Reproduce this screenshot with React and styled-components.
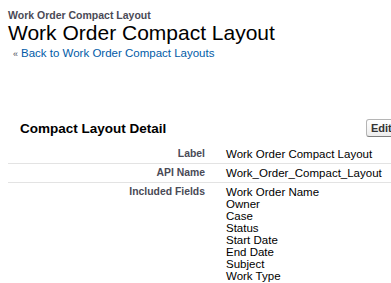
import React from "react";
import styled, { createGlobalStyle } from "styled-components";

const GlobalStyle = createGlobalStyle`
  html, body {
    margin: 0;
    padding: 0;
    background: #ffffff;
    overflow: hidden;
  }
  body {
    font-family: "Liberation Sans", Arial, Helvetica, sans-serif;
    color: #000000;
  }
`;

const fields = [
  "Work Order Name",
  "Owner",
  "Case",
  "Status",
  "Start Date",
  "End Date",
  "Subject",
  "Work Type",
];

export default function App() {
  return (
    <Page>
      <GlobalStyle />
      <Header>
        <PageType>Work Order Compact Layout</PageType>
        <PageTitle>Work Order Compact Layout</PageTitle>
        <BackRow>
          <Chevron>«</Chevron>
          <BackLink href="#">Back to Work Order Compact Layouts</BackLink>
        </BackRow>
      </Header>

      <Section>
        <SectionHeader>
          <SectionTitle>Compact Layout Detail</SectionTitle>
          <EditButton>Edit</EditButton>
        </SectionHeader>
        <DetailTable>
          <DetailRow>
            <LabelCol>Label</LabelCol>
            <DataCol>Work Order Compact Layout</DataCol>
          </DetailRow>
          <DetailRow>
            <LabelCol>API Name</LabelCol>
            <DataCol>Work_Order_Compact_Layout</DataCol>
          </DetailRow>
          <DetailRow last>
            <LabelCol>Included Fields</LabelCol>
            <DataCol>
              {fields.map((f) => (
                <FieldLine key={f}>{f}</FieldLine>
              ))}
            </DataCol>
          </DetailRow>
        </DetailTable>
      </Section>
    </Page>
  );
}

const Page = styled.div`
  width: 460px;
`;

const Header = styled.div`
  padding: 9px 0 0 8px;
`;

const PageType = styled.div`
  font-size: 10.5px;
  line-height: 12px;
  font-weight: bold;
  color: #4a4a56;
`;

const PageTitle = styled.h1`
  margin: 0;
  font-size: 21px;
  line-height: 24px;
  font-weight: normal;
  color: #000000;
`;

const BackRow = styled.div`
  display: flex;
  align-items: baseline;
  gap: 3px;
  margin: 1px 0 0 5px;
  font-size: 11.5px;
  line-height: 14px;
`;

const Chevron = styled.span`
  font-size: 9px;
  color: #4a4a56;
`;

const BackLink = styled.a`
  color: #015ba7;
  text-decoration: none;
`;

const Section = styled.div`
  margin: 54px 0 0 8px;
`;

const SectionHeader = styled.div`
  display: flex;
  align-items: center;
  height: 26px;
  padding: 0 0 4px 12px;
`;

const SectionTitle = styled.h2`
  margin: 0;
  font-size: 13.5px;
  font-weight: bold;
  color: #000000;
  width: 346px;
`;

const EditButton = styled.button`
  height: 18px;
  padding: 0 4px;
  font-family: inherit;
  font-size: 11px;
  font-weight: bold;
  color: #333333;
  background: linear-gradient(#ffffff, #ededed);
  border: 1px solid #b5b5b5;
  border-bottom-color: #7f7f7f;
  border-radius: 3px;
`;

const DetailTable = styled.div`
  display: flex;
  flex-direction: column;
`;

const DetailRow = styled.div`
  display: grid;
  grid-template-columns: 197px 1fr;
  column-gap: 21px;
  padding: 3px 0;
  border-bottom: ${(p) => (p.last ? "none" : "1px solid #e3e3e3")};
`;

const LabelCol = styled.div`
  text-align: right;
  font-size: 10.4px;
  line-height: 12px;
  font-weight: bold;
  color: #4a4a56;
`;

const DataCol = styled.div`
  font-size: 11.5px;
  line-height: 12px;
  color: #000000;
`;

const FieldLine = styled.div``;
